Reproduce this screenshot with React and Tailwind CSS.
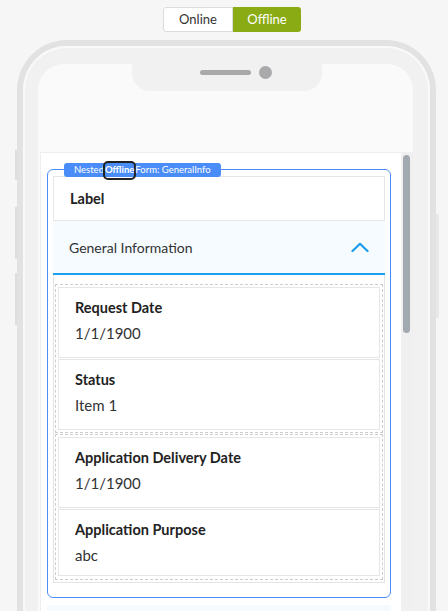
import React from 'react';

const Field = ({ label, value, last }) => (
  <div className={`border border-[#e6e6e6] bg-white pl-[16px] pt-[10px] ${last ? 'pb-[10px]' : 'pb-[14px]'}`}>
    <div className="text-[14.5px] font-bold leading-[20px] text-[#222]">{label}</div>
    <div className="mt-[5px] text-[15px] leading-[20px] text-[#333]">{value}</div>
  </div>
);

const Group = ({ children, bottom }) => (
  <div className={`flex flex-col gap-[1px] border border-dashed border-[#cdcdcd] px-[2px] pt-[2px] ${bottom ? 'pb-[3px]' : 'pb-[2px]'}`}>
    {children}
  </div>
);

export default function App() {
  return (
    <div className="h-[611px] overflow-hidden bg-[#f6f6f6] font-['Lato',sans-serif]">
      {/* online / offline toggle */}
      <div className="flex h-[40px] pl-[163px] pt-[7px]">
        <div className="flex h-[25px]">
          <button className="w-[70px] rounded-l-[3px] border border-[#dcdcdc] bg-white text-[13px] text-[#333]">Online</button>
          <button className="w-[68px] rounded-r-[3px] bg-[#8aab14] text-[13px] text-white">Offline</button>
        </div>
      </div>

      {/* phone */}
      <div className="relative ml-[17px] h-[571px] w-[419px]">
        <div className="absolute left-[-2px] top-[110px] h-[30px] w-[2px] bg-[#dedede]" />
        <div className="absolute left-[-2px] top-[167px] h-[52px] w-[2px] bg-[#dedede]" />
        <div className="absolute left-[-2px] top-[233px] h-[52px] w-[2px] bg-[#dedede]" />
        <div className="absolute right-[-3px] top-[174px] h-[104px] w-[3px] bg-[#e8e8e8]" />

        <div className="h-full rounded-t-[50px] border-[6px] border-b-0 border-[#e2e2e2]">
          <div className="h-full rounded-t-[44px] border-2 border-b-0 border-[#f9f9f9] bg-[#f1f1f1] pl-[13px] pr-[15px] pt-[16px]">
            <div className="flex h-full flex-col rounded-t-[26px] bg-[#fafafa]">
              {/* notch */}
              <div className="ml-[94px] h-[27px] w-[190px] rounded-b-[18px] bg-[#f1f1f1]">
                <div className="flex h-[16px] items-center pl-[68px]">
                  <div className="h-[5px] w-[51px] rounded-full bg-[#a9a9ab]" />
                  <div className="ml-[8px] h-[13px] w-[13px] rounded-full bg-[#a9a9ab]" />
                </div>
              </div>
              <div className="h-[61px]" />

              {/* screen content */}
              <div className="flex min-h-0 flex-1">
                <div className="ml-[2px] flex-1 border-l border-t border-[#eeeeee] bg-white pl-[6px] pr-[10px] pt-[16px]">
                  <div className="relative rounded-[6px] border border-[#4b8df8] px-[5px] pb-[14px] pt-[6px]">
                    <div className="absolute left-[16px] top-[-7px] flex h-[14px] items-center rounded-[3px] bg-[#4b8df8] pl-[10px] pr-[10px] text-[9.5px] leading-[14px] text-white">
                      <span>Nested</span>
                      <span className="mx-[-1px] inline-flex h-[19px] items-center rounded-[5px] border-2 border-[#222] font-bold">Offline</span>
                      <span>Form: GeneralInfo</span>
                    </div>

                    <div className="flex h-[45px] items-center border border-[#e6e6e6] bg-white pl-[16px] text-[14.5px] font-bold text-[#222]">
                      Label
                    </div>

                    <div className="flex h-[54px] items-center justify-between border-b-2 border-[#1a9ff0] bg-[#f5fbff] pl-[16px] pr-[16px]">
                      <span className="text-[14px] text-[#333]">General Information</span>
                      <svg width="18" height="10" viewBox="0 0 18 10" fill="none">
                        <path d="M1.5 9 L9 1.8 L16.5 9" stroke="#1c9ce8" strokeWidth="2.2" strokeLinecap="round" strokeLinejoin="round" />
                      </svg>
                    </div>

                    <div className="flex flex-col gap-[1px] border-x border-b border-[#e3e3e3] px-[1px] pb-[2px] pt-[9px]">
                      <Group>
                        <Field label="Request Date" value="1/1/1900" />
                        <Field label="Status" value="Item 1" />
                      </Group>
                      <Group bottom>
                        <Field label="Application Delivery Date" value="1/1/1900" />
                        <Field label="Application Purpose" value="abc" last />
                      </Group>
                    </div>
                  </div>
                  <div className="mt-[7px] h-[30px] bg-[#f5faff]" />
                </div>

                {/* scrollbar */}
                <div className="w-[12px] bg-[#f0f0f0] pl-[2px] pt-[3px]">
                  <div className="h-[178px] w-[7px] rounded-full bg-[#a3a9b0]" />
                </div>
              </div>
            </div>
          </div>
        </div>
      </div>
    </div>
  );
}
